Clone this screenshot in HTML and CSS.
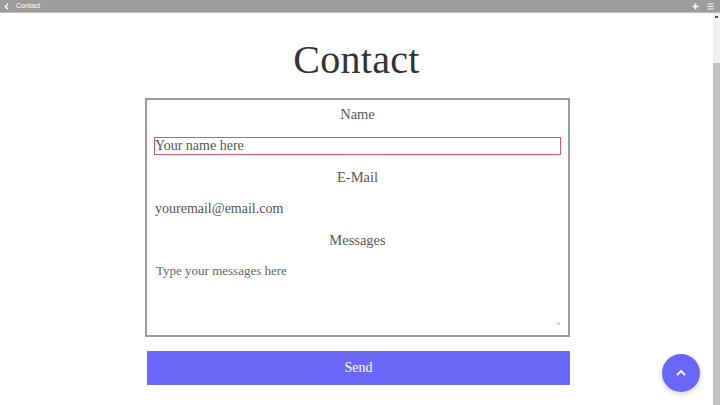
FILE: index.html
```html
<!DOCTYPE html>
<html lang="en">
<head>
<meta charset="utf-8">
<title>Contact</title>
<link rel="stylesheet" href="styles.css">
</head>
<body>
<header class="topbar">
  <div class="topbar-left">
    <svg class="back" width="6" height="7" viewBox="0 0 6 7"><path d="M4 0.8 L1.5 3.5 L4 6.2" fill="none" stroke="#fff" stroke-width="1.4"/></svg>
    <span class="topbar-title">Contact</span>
  </div>
  <div class="topbar-right">
    <svg width="7" height="7" viewBox="0 0 7 7"><path d="M3.5 0.5 V6.5 M0.5 3.5 H6.5" stroke="#fff" stroke-width="1.6"/></svg>
    <svg width="7" height="7" viewBox="0 0 7 7"><path d="M0.5 1 H6.5 M0.5 3.5 H6.5 M0.5 6 H6.5" stroke="#fff" stroke-width="1.2"/></svg>
  </div>
</header>
<div class="viewport">
  <main class="content">
    <h1 class="title">Contact</h1>
    <form class="contact-form">
      <div class="form-box">
        <div class="field">
          <label class="label" for="name">Name</label>
          <input class="input input-focus" id="name" type="text" placeholder="Your name here">
        </div>
        <div class="field">
          <label class="label" for="email">E-Mail</label>
          <input class="input" id="email" type="text" placeholder="youremail@email.com">
        </div>
        <div class="field">
          <label class="label" for="msg">Messages</label>
          <div class="textarea-wrap">
            <textarea class="textarea" id="msg" placeholder="Type your messages here"></textarea>
            <span class="grip"></span>
          </div>
        </div>
      </div>
      <button class="send" type="button">Send</button>
    </form>
  </main>
  <div class="scrollbar">
    <div class="track"><span class="arrow"></span></div>
    <div class="thumb"></div>
  </div>
</div>
<button class="fab" type="button" aria-label="Back to top">
  <svg width="12" height="8" viewBox="0 0 12 8"><path d="M2 6 L6 2 L10 6" fill="none" stroke="#fff" stroke-width="1.8"/></svg>
</button>
</body>
</html>
```
FILE: styles.css
```css
* { box-sizing: border-box; }
html, body { margin: 0; padding: 0; height: 100%; overflow: hidden; }
body {
  background: #fff;
  font-family: "Liberation Serif", "DejaVu Serif", serif;
  color: #555;
}
.topbar {
  height: 13px;
  background: #9c9c9c;
  display: flex;
  align-items: center;
  justify-content: space-between;
  padding: 0 6px 0 4px;
  border-bottom: 1px solid #bdbdbd;
}
.topbar-left { display: flex; align-items: center; gap: 6px; }
.topbar-title {
  font-family: "Liberation Sans", Arial, sans-serif;
  font-size: 7px;
  color: #fff;
  line-height: 12px;
}
.topbar-right { display: flex; align-items: center; gap: 8px; }
.viewport {
  display: flex;
  height: calc(100% - 13px);
}
.content {
  flex: 1;
  display: flex;
  flex-direction: column;
  align-items: center;
}
.title {
  margin: 23px 0 0;
  font-size: 40px;
  font-weight: 400;
  line-height: 48px;
  color: #333;
  letter-spacing: 0.3px;
}
.contact-form {
  width: 425px;
  margin-top: 14px;
  margin-left: 2px;
}
.form-box {
  border: 2px solid #9a9a9a;
  padding: 4px 7px 7px;
  display: flex;
  flex-direction: column;
  gap: 12px;
}
.field { display: flex; flex-direction: column; }
.label {
  display: block;
  text-align: center;
  font-size: 14.5px;
  line-height: 20px;
  color: #595959;
}
.input {
  margin-top: 13px;
  height: 18px;
  border: 1px solid transparent;
  padding: 0;
  font-family: inherit;
  font-size: 14px;
  line-height: 16px;
  color: #444;
  background: transparent;
  outline: none;
}
.input::placeholder { color: #555; opacity: 1; }
.input-focus { border-color: #d9566c; }
.textarea-wrap {
  margin-top: 11px;
  position: relative;
  height: 67px;
}
.textarea {
  display: block;
  width: 100%;
  height: 100%;
  border: none;
  padding: 2px 2px;
  font-family: inherit;
  font-size: 13px;
  line-height: 16px;
  resize: none;
  outline: none;
}
.textarea::placeholder { color: #666; opacity: 1; }
.grip {
  position: absolute;
  right: 1px;
  bottom: 3px;
  width: 3px;
  height: 3px;
  background: #d4d4d4;
}
.send {
  display: block;
  width: 423px;
  height: 34px;
  margin: 14px 0 0 2px;
  border: none;
  background: #6a67f8;
  color: #fff;
  font-family: inherit;
  font-size: 14px;
}
.scrollbar {
  width: 7px;
  display: flex;
  flex-direction: column;
}
.track {
  height: 50px;
  background: #f1f1f1;
  position: relative;
}
.arrow {
  position: absolute;
  left: 2px;
  top: 3px;
  width: 3px;
  height: 2px;
  background: #555;
}
.thumb {
  flex: 1;
  background: #c1c1c1;
}
.fab {
  position: fixed;
  right: 20px;
  bottom: 13px;
  width: 38px;
  height: 38px;
  border-radius: 50%;
  border: none;
  background: #6a67f8;
  box-shadow: 0 2px 6px rgba(0,0,0,0.18);
  display: flex;
  align-items: center;
  justify-content: center;
  padding: 0;
}
```
